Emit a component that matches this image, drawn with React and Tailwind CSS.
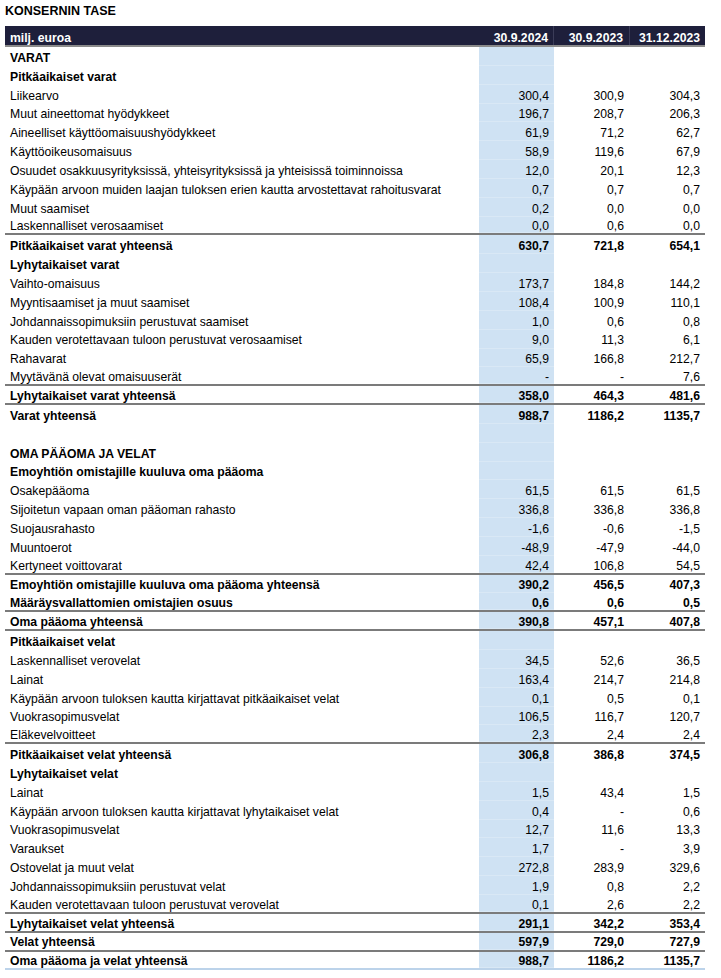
import React from 'react';

const rows = [
  { label: 'VARAT', bold: true },
  { label: 'Pitkäaikaiset varat', bold: true },
  { label: 'Liikearvo', v: ['300,4', '300,9', '304,3'] },
  { label: 'Muut aineettomat hyödykkeet', v: ['196,7', '208,7', '206,3'] },
  { label: 'Aineelliset käyttöomaisuushyödykkeet', v: ['61,9', '71,2', '62,7'] },
  { label: 'Käyttöoikeusomaisuus', v: ['58,9', '119,6', '67,9'] },
  { label: 'Osuudet osakkuusyrityksissä, yhteisyrityksissä ja yhteisissä toiminnoissa', v: ['12,0', '20,1', '12,3'] },
  { label: 'Käypään arvoon muiden laajan tuloksen erien kautta arvostettavat rahoitusvarat', v: ['0,7', '0,7', '0,7'] },
  { label: 'Muut saamiset', v: ['0,2', '0,0', '0,0'] },
  { label: 'Laskennalliset verosaamiset', v: ['0,0', '0,6', '0,0'], line: true },
  { label: 'Pitkäaikaiset varat yhteensä', v: ['630,7', '721,8', '654,1'], bold: true },
  { label: 'Lyhytaikaiset varat', bold: true },
  { label: 'Vaihto-omaisuus', v: ['173,7', '184,8', '144,2'] },
  { label: 'Myyntisaamiset ja muut saamiset', v: ['108,4', '100,9', '110,1'] },
  { label: 'Johdannaissopimuksiin perustuvat saamiset', v: ['1,0', '0,6', '0,8'] },
  { label: 'Kauden verotettavaan tuloon perustuvat verosaamiset', v: ['9,0', '11,3', '6,1'] },
  { label: 'Rahavarat', v: ['65,9', '166,8', '212,7'] },
  { label: 'Myytävänä olevat omaisuuserät', v: ['-', '-', '7,6'], line: true },
  { label: 'Lyhytaikaiset varat yhteensä', v: ['358,0', '464,3', '481,6'], bold: true, line: true },
  { label: 'Varat yhteensä', v: ['988,7', '1186,2', '1135,7'], bold: true },
  { label: '' },
  { label: 'OMA PÄÄOMA JA VELAT', bold: true },
  { label: 'Emoyhtiön omistajille kuuluva oma pääoma', bold: true },
  { label: 'Osakepääoma', v: ['61,5', '61,5', '61,5'] },
  { label: 'Sijoitetun vapaan oman pääoman rahasto', v: ['336,8', '336,8', '336,8'] },
  { label: 'Suojausrahasto', v: ['-1,6', '-0,6', '-1,5'] },
  { label: 'Muuntoerot', v: ['-48,9', '-47,9', '-44,0'] },
  { label: 'Kertyneet voittovarat', v: ['42,4', '106,8', '54,5'], line: true },
  { label: 'Emoyhtiön omistajille kuuluva oma pääoma yhteensä', v: ['390,2', '456,5', '407,3'], bold: true },
  { label: 'Määräysvallattomien omistajien osuus', v: ['0,6', '0,6', '0,5'], bold: true, line: true },
  { label: 'Oma pääoma yhteensä', v: ['390,8', '457,1', '407,8'], bold: true, line: true },
  { label: 'Pitkäaikaiset velat', bold: true },
  { label: 'Laskennalliset verovelat', v: ['34,5', '52,6', '36,5'] },
  { label: 'Lainat', v: ['163,4', '214,7', '214,8'] },
  { label: 'Käypään arvoon tuloksen kautta kirjattavat pitkäaikaiset velat', v: ['0,1', '0,5', '0,1'] },
  { label: 'Vuokrasopimusvelat', v: ['106,5', '116,7', '120,7'] },
  { label: 'Eläkevelvoitteet', v: ['2,3', '2,4', '2,4'], line: true },
  { label: 'Pitkäaikaiset velat yhteensä', v: ['306,8', '386,8', '374,5'], bold: true },
  { label: 'Lyhytaikaiset velat', bold: true },
  { label: 'Lainat', v: ['1,5', '43,4', '1,5'] },
  { label: 'Käypään arvoon tuloksen kautta kirjattavat lyhytaikaiset velat', v: ['0,4', '-', '0,6'] },
  { label: 'Vuokrasopimusvelat', v: ['12,7', '11,6', '13,3'] },
  { label: 'Varaukset', v: ['1,7', '-', '3,9'] },
  { label: 'Ostovelat ja muut velat', v: ['272,8', '283,9', '329,6'] },
  { label: 'Johdannaissopimuksiin perustuvat velat', v: ['1,9', '0,8', '2,2'] },
  { label: 'Kauden verotettavaan tuloon perustuvat verovelat', v: ['0,1', '2,6', '2,2'], line: true },
  { label: 'Lyhytaikaiset velat yhteensä', v: ['291,1', '342,2', '353,4'], bold: true, line: true },
  { label: 'Velat yhteensä', v: ['597,9', '729,0', '727,9'], bold: true, line: true },
  { label: 'Oma pääoma ja velat yhteensä', v: ['988,7', '1186,2', '1135,7'], bold: true, last: true },
];

function Row({ row }) {
  const v = row.v || ['', '', ''];
  const border = row.line
    ? 'border-b-2 border-[#7b7b7b]'
    : row.last
      ? 'border-b-2 border-[#bcd3ea]'
      : '';
  return (
    <div className={`grid grid-cols-[474px_75px_76px_75px] h-[18.85px] ${border} ${row.bold ? 'font-bold' : ''}`}>
      <div className="flex items-center pt-[3px] pl-[5px] whitespace-nowrap overflow-hidden">{row.label}</div>
      <div className="flex items-center justify-end pt-[3px] pr-[5px] bg-[#cfe2f3] shadow-[inset_0_-1px_0_#d9e8f5]">{v[0]}</div>
      <div className="flex items-center justify-end pt-[3px] pr-[6px]">{v[1]}</div>
      <div className="flex items-center justify-end pt-[3px] pr-[5px]">{v[2]}</div>
    </div>
  );
}

export default function App() {
  return (
    <div className="w-[721px] h-[978px] bg-white text-black text-[12.2px] leading-none font-['Liberation_Sans',Arial,sans-serif] overflow-hidden">
      <div className="pl-[5px] pt-[5px] h-[26px] font-bold text-[12.5px]">KONSERNIN TASE</div>
      <div className="ml-[5px] w-[700px]">
        <div className="grid grid-cols-[474px_75px_76px_75px] h-[21px] bg-[#1e1f3b] text-white font-bold border-b-2 border-[#8a8a8a]">
          <div className="pl-[5px] flex items-end pb-[1px]">milj. euroa</div>
          <div className="flex items-end justify-end pr-[5px] pb-[1px] border-r border-[#3b3c58]">30.9.2024</div>
          <div className="flex items-end justify-end pr-[6px] pb-[1px] border-r border-[#3b3c58]">30.9.2023</div>
          <div className="flex items-end justify-end pr-[5px] pb-[1px]">31.12.2023</div>
        </div>
        {rows.map((r, i) => (
          <Row key={i} row={r} />
        ))}
      </div>
    </div>
  );
}
